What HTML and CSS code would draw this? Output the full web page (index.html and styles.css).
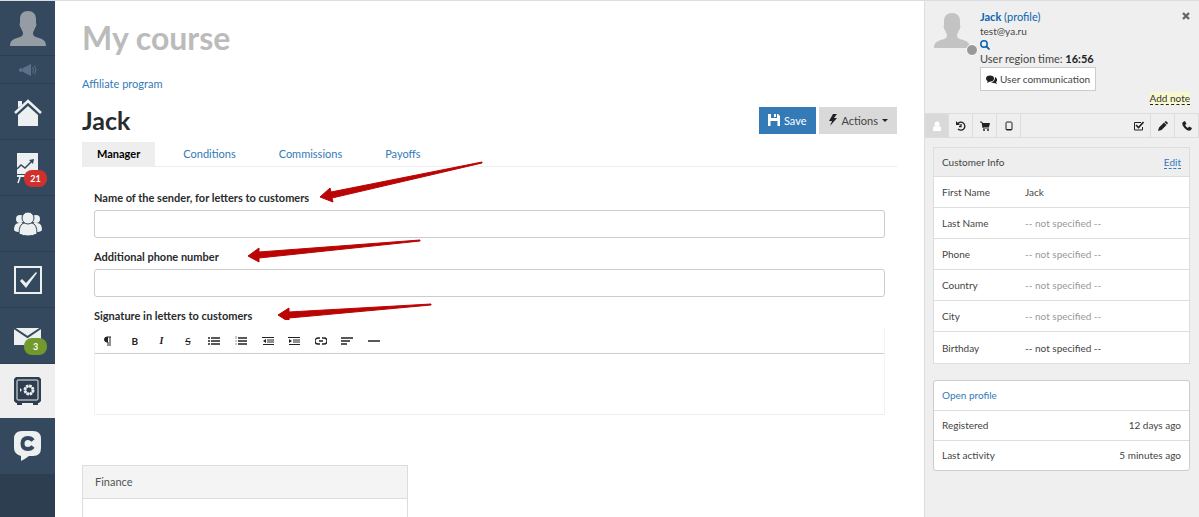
FILE: index.html
```html
<!DOCTYPE html>
<html lang="en">
<head>
    <meta charset="UTF-8">
    <meta name="viewport" content="width=device-width, initial-scale=1.0">
    <title>My course - Jack</title>
    <link rel="stylesheet" href="styles.css">
</head>
<body>
    <nav class="sidebar">
        <a href="#" class="item avatar" aria-label="Profile">
            <svg width="36" height="36" viewBox="0 0 36 36"><path fill="#959ca3" d="M18 1c5 0 8 3 8 8 0 2 0 3 0 4 1 1 0 4-1 5-1 3-2 4-2 5 0 3 2 4 6 5 4 1 7 3 7 8H0c0-5 3-7 7-8 4-1 6-2 6-5 0-1-1-2-2-5-1-1-2-4-1-5 0-1 0-2 0-4 0-5 3-8 8-8z"/></svg>
        </a>
        <a href="#" class="item news" aria-label="News">
            <svg width="18" height="14" viewBox="0 0 18 14" fill="#5b7189"><circle cx="2" cy="7" r="2"/><path d="M4 5l8-4v12L4 9z"/><path d="M13.500 4q2 3 0 6M15.500 2.500q3 4.500 0 9" fill="none" stroke="#5b7189"/></svg>
        </a>
        <a href="#" class="item" aria-label="Home">
            <svg width="28" height="28" viewBox="0 0 28 28" fill="#ecf0f1"><path d="M4 10V3h4v4z"/><path d="M1 15L14 3l13 12" fill="none" stroke="#ecf0f1" stroke-width="2.500"/><path d="M4 17L14 8l10 9v11H4z"/></svg>
        </a>
        <a href="#" class="item" aria-label="Statistics">
            <svg width="28" height="32" viewBox="0 0 28 32"><path fill="#ecf0f1" d="M3 1h21v21H3zM3 23h21v2H3z"/><path d="M3 17l4-4 4 3 7-7" fill="none" stroke="#34495e" stroke-width="1.500"/><path d="M15 8l5-1-1 5z" fill="#34495e"/><path d="M6 25l-2 6M13 25v5" stroke="#ecf0f1" stroke-width="1.500"/></svg>
            <span class="badge red">21</span>
        </a>
        <a href="#" class="item" aria-label="Users">
            <svg width="28" height="26" viewBox="0 0 28 26" fill="#ecf0f1"><circle cx="6" cy="8" r="4"/><circle cx="22" cy="8" r="4"/><path d="M0 19q0-7 5-7h4l-3 9q-5 0-6-2zM28 19q0-7-5-7h-4l3 9q5 0 6-2z"/><g stroke="#34495e"><path d="M5 23q0-10 5-11h8q5 1 5 11-9 4-18 0z"/><circle cx="14" cy="7" r="6"/></g></svg>
        </a>
        <a href="#" class="item" aria-label="Tasks">
            <svg width="28" height="28" viewBox="0 0 28 28"><rect x="1" y="1" width="26" height="26" fill="none" stroke="#ecf0f1" stroke-width="2"/><path d="M6 15l2-2 4 4L22 6l1 1-11 15z" fill="#ecf0f1"/></svg>
        </a>
        <a href="#" class="item" aria-label="Messages">
            <svg width="28" height="20" viewBox="0 0 28 20"><path fill="#ecf0f1" d="M0 2h27v17H0z"/><path d="M0 2l13.500 9L27 2" fill="none" stroke="#34495e" stroke-width="2"/></svg>
            <span class="badge green">3</span>
        </a>
        <a href="#" class="item active" aria-label="Affiliate program">
            <svg width="28" height="28" viewBox="0 0 28 28"><path fill="#2c3e50" d="M2 0h23l2 2v22l-2 2h-1v2h-5v-2H8v2H3v-2H2l-2-2V2z"/><rect x="3" y="3" width="21" height="20" rx="1" fill="none" stroke="#efefef"/><circle cx="15" cy="13" r="4" fill="none" stroke="#efefef" stroke-width="3" stroke-dasharray="2.200 .9"/><circle cx="15" cy="13" r="4" fill="none" stroke="#efefef"/><path d="M6 11v4l2-2z" fill="#efefef"/></svg>
        </a>
        <a href="#" class="item chat" aria-label="Chatium">
            <svg width="28" height="32" viewBox="0 0 28 32"><path fill="#ecf0f1" d="M8 1h11q8 0 8 8v9q0 8-8 8h-4q-4 3-8 5v-5q-7-2-7-8V9q0-8 8-8z"/><path d="M19 10.500q-2-2.500-5-2.500-5.500 0-5.500 5.500T14 19q3 0 5-2.500" fill="none" stroke="#34495e" stroke-width="4"/></svg>
        </a>
    </nav>

    <main class="main">
        <h1>My course</h1>
        <a href="#" class="crumb">Affiliate program</a>

        <div class="title-row">
            <h2>Jack</h2>
            <div class="buttons">
                <button type="button" class="btn save"><svg width="12" height="12" viewBox="0 0 12 12"><path fill="#fff" d="M0 0h3v4h6V0h1l2 2v10H9.500V7h-7v5H0zM6 0h2v3H6z"/></svg>Save</button>
                <button type="button" class="btn actions"><svg width="10" height="12" viewBox="0 0 10 12"><path fill="#222" d="M5 0h4L6 4h3L2 12l2-5H1z"/></svg>Actions<span class="caret"></span></button>
            </div>
        </div>

        <div class="tabs">
            <a href="#" class="tab current">Manager</a>
            <a href="#" class="tab">Conditions</a>
            <a href="#" class="tab">Commissions</a>
            <a href="#" class="tab">Payoffs</a>
        </div>

        <form class="form">
            <label for="senderName">Name of the sender, for letters to customers</label>
            <input type="text" id="senderName">
            <label for="phone">Additional phone number</label>
            <input type="text" id="phone">
            <label for="signature">Signature in letters to customers</label>
            <div class="editor">
                <div class="toolbar">
                    <button type="button" aria-label="Format"><svg viewBox="0 0 12 12"><path d="M9 2H5a2 2 0 0 0 0 5h1v4M8 2v9" fill="none" stroke="#222"/><path d="M6 2H5a2 2 0 0 0 0 5h1z" fill="#222"/></svg></button>
                    <button type="button" class="bold">B</button>
                    <button type="button" class="italic">I</button>
                    <button type="button" class="strike">S</button>
                    <button type="button" aria-label="Bulleted list"><svg viewBox="0 0 12 12"><path d="M0 3h2M0 6h2M0 9h2M3 3h9M3 6h9M3 9h9" stroke="#222" stroke-width="1.500"/></svg></button>
                    <button type="button" aria-label="Numbered list"><svg viewBox="0 0 12 12"><path d="M3 3h9M3 6h9M3 9h9" stroke="#222" stroke-width="1.500"/><path d="M1 1v3M0 6h2M0 9h2" stroke="#999"/></svg></button>
                    <button type="button" aria-label="Outdent"><svg viewBox="0 0 12 12"><path d="M0 2.500h12M5 5h7M5 7h7M1 9.500h11" stroke="#222" stroke-width="1.200"/><path d="M4 4v4L1 6z" fill="#222"/></svg></button>
                    <button type="button" aria-label="Indent"><svg viewBox="0 0 12 12"><path d="M0 2.500h12M5 5h7M5 7h7M1 9.500h11" stroke="#222" stroke-width="1.200"/><path d="M1 4v4l3-2z" fill="#222"/></svg></button>
                    <button type="button" aria-label="Link"><svg viewBox="0 0 12 12"><path d="M5 3H3a3 3 0 0 0 0 6h2M7 3h2a3 3 0 0 1 0 6H7M4 6h4" fill="none" stroke="#222" stroke-width="1.300"/></svg></button>
                    <button type="button" aria-label="Align"><svg viewBox="0 0 12 12"><path d="M0 3h12M0 6h9M0 9h6" stroke="#222" stroke-width="1.500"/></svg></button>
                    <button type="button" aria-label="Line"><svg viewBox="0 0 12 12"><path d="M0 6h12" stroke="#222" stroke-width="1.500"/></svg></button>
                </div>
                <textarea id="signature"></textarea>
            </div>
            <!-- hint arrows over the field labels -->
            <svg class="arrows" width="400" height="160" viewBox="94 160 400 160" fill="#b90504" stroke="#b90504" stroke-linejoin="round">
                <path d="M320 197l10-9 1 4L482 162v1L332 198l1 4z"/>
                <path d="M248 256l11-8v4l161-12v1L259 258v4z"/>
                <path d="M278 315l11-7v4l142-8v1L289 318v4z"/>
            </svg>
        </form>

        <section class="finance">
            <h3>Finance</h3>
        </section>
    </main>

    <aside class="panel">
        <div class="user">
            <div class="photo">
                <svg width="36" height="36" viewBox="0 0 36 36"><path fill="#c3c3c3" d="M18 1c5 0 8 3 8 8 0 2 0 3 0 4 1 1 0 4-1 5-1 3-2 4-2 5 0 3 2 4 6 5 4 1 7 3 7 8H0c0-5 3-7 7-8 4-1 6-2 6-5 0-1-1-2-2-5-1-1-2-4-1-5 0-1 0-2 0-4 0-5 3-8 8-8z"/></svg>
                <span class="status"></span>
            </div>
            <div class="info">
                <div class="name"><a href="#"><b>Jack</b> (profile)</a></div>
                <div class="email">test@ya.ru</div>
                <a href="#" class="search" aria-label="Search"><svg width="10" height="10" viewBox="0 0 10 10"><circle cx="4" cy="4" r="3.200" fill="none" stroke="#0b64af" stroke-width="1.500"/><path d="M6.500 6.500L9.500 9.500" stroke="#0b64af" stroke-width="1.800"/></svg></a>
                <div class="time">User region time: <b>16:56</b></div>
                <button type="button" class="talk"><svg width="11" height="9" viewBox="0 0 11 9"><ellipse cx="4" cy="3.500" rx="4" ry="3" fill="#222"/><path d="M2 5L1 8l4-2zM9 2q4 3 1 5l1 2-3-1q-2 0-3-1 4 0 4-5z" fill="#222"/></svg>User communication</button>
            </div>
            <button type="button" class="close" aria-label="Close"><svg width="8" height="8" viewBox="0 0 8 8"><path d="M1 1l6 6M7 1L1 7" stroke="#666" stroke-width="2.400"/></svg></button>
        </div>
        <div class="note"><a href="#">Add note</a></div>

        <div class="tools">
            <button type="button" class="on" aria-label="User"><svg viewBox="0 0 10 10" fill="#fff"><circle cx="5" cy="3" r="2.500"/><path d="M1 10V8q0-3 2-3 2 1 4 0 2 0 2 3v2z"/></svg></button>
            <button type="button" aria-label="History"><svg viewBox="0 0 10 10"><path d="M1.500 3A4 4 0 1 1 2 8M5 3v2.500H3" fill="none" stroke="#222" stroke-width="1.300"/><path d="M0 0v4h4z" fill="#222"/></svg></button>
            <button type="button" aria-label="Orders"><svg viewBox="0 0 10 10" fill="#222"><path d="M0 1h2l1 6h6" fill="none" stroke="#222"/><path d="M2 2h8L9 6H3z"/><circle cx="4" cy="9" r="1"/><circle cx="8" cy="9" r="1"/></svg></button>
            <button type="button" aria-label="Device"><svg viewBox="0 0 10 10"><rect x="2" y="1" width="6" height="8" rx="1" fill="none" stroke="#222"/><path d="M2 8.500h6" stroke="#222"/></svg></button>
            <button type="button" class="push" aria-label="Task"><svg viewBox="0 0 10 10"><path d="M8.500 6v3h-8V1.500H7" fill="none" stroke="#222"/><path d="M2 4l2.500 2.500L9.500 1" fill="none" stroke="#222" stroke-width="1.600"/></svg></button>
            <button type="button" aria-label="Edit"><svg viewBox="0 0 10 10" fill="#222"><path d="M0 10l1-3.500L6 1.500 8.500 4l-5 5zM6.500 1L8 0l2 2-1 1.500z"/></svg></button>
            <button type="button" aria-label="Call"><svg viewBox="0 0 10 10"><path fill="#222" d="M1 1l2-1 1.500 3L3 4q1 2 3 3l1-1.500 3 1.500-1 2q-3 2-6.500-2T1 1z"/></svg></button>
        </div>

        <table class="card customer">
            <thead>
                <tr><th>Customer Info</th><td><a href="#">Edit</a></td></tr>
            </thead>
            <tbody>
                <tr><th>First Name</th><td class="filled">Jack</td></tr>
                <tr><th>Last Name</th><td>-- not specified --</td></tr>
                <tr><th>Phone</th><td>-- not specified --</td></tr>
                <tr><th>Country</th><td>-- not specified --</td></tr>
                <tr><th>City</th><td>-- not specified --</td></tr>
                <tr><th>Birthday</th><td class="filled">-- not specified --</td></tr>
            </tbody>
        </table>

        <div class="card stats">
            <div class="row"><a href="#">Open profile</a></div>
            <div class="row"><span>Registered</span><span>12 days ago</span></div>
            <div class="row"><span>Last activity</span><span>5 minutes ago</span></div>
        </div>
    </aside>
</body>
</html>
```

FILE: styles.css
```css
* {
    box-sizing: border-box;
}

body {
    margin: 0;
    display: flex;
    min-height: 100vh;
    font-family: Lato, "Liberation Sans", sans-serif;
    font-size: 11px;
    color: #444;
    background: #fff;
    border-top: 1px solid #dcdce4;
}

a {
    color: #337ab7;
    text-decoration: none;
}

button {
    font-family: inherit;
    cursor: pointer;
}

svg {
    display: block;
}

/* left menu */
.sidebar {
    width: 55px;
    flex: none;
    background: #2c3e50;
}

.item {
    position: relative;
    display: flex;
    align-items: center;
    justify-content: center;
    height: 56px;
    background: #34495e;
    border-bottom: 1px solid #2c3e50;
}

.item.avatar {
    height: 55px;
}

.item.news {
    height: 28px;
}

.item.active {
    height: 54px;
    background: #efefef;
    border-bottom: none;
}

.item.chat {
    border-bottom: none;
}

.badge {
    position: absolute;
    left: 24px;
    top: 30px;
    width: 23px;
    height: 17px;
    border-radius: 8px;
    color: #fff;
    font-size: 9px;
    font-weight: bold;
    line-height: 17px;
    text-align: center;
}

.badge.red {
    background: #d0312d;
}

.badge.green {
    background: #71992c;
}

/* content */
.main {
    display: flex;
    flex-direction: column;
    flex: 1;
    min-width: 0;
    padding: 18px 27px 0;
}

h1 {
    margin: 0 0 19px;
    font-size: 32px;
    line-height: 38px;
    color: #bbb;
}

.crumb {
    align-self: flex-start;
    line-height: 16px;
}

.title-row {
    display: flex;
    justify-content: space-between;
    align-items: center;
    margin-top: 14px;
    height: 28px;
}

h2 {
    margin: 0;
    font-size: 25px;
    line-height: 28px;
    color: #292b2c;
}

.buttons {
    display: flex;
    gap: 3px;
}

.btn {
    display: flex;
    align-items: center;
    gap: 4px;
    height: 27px;
    padding: 0 9px;
    border: none;
    font-size: 11px;
}

.save {
    background: #337ab7;
    color: #fff;
}

.actions {
    background: #d9d9d9;
    color: #444;
}

.caret {
    border: 3px solid transparent;
    border-top-color: #222;
    border-bottom: none;
}

.tabs {
    display: flex;
    gap: 13px;
    margin-top: 8px;
    border-bottom: 1px solid #eee;
}

.tab {
    padding: 0 15px;
    line-height: 24px;
}

.tab.current {
    background: #eee;
    color: #000;
    font-weight: bold;
}

.form {
    position: relative;
    padding: 22px 12px 0;
}

.form label {
    display: block;
    line-height: 17px;
    margin-bottom: 4px;
    font-weight: bold;
    color: #292b2c;
}

.form input {
    display: block;
    width: 100%;
    height: 28px;
    margin-bottom: 10px;
    border: 1px solid #ccc;
    border-radius: 3px;
}

.toolbar {
    display: grid;
    grid-template-columns: repeat(11, 1fr);
    width: 292px;
    height: 25px;
    align-items: center;
}

.toolbar button {
    display: flex;
    justify-content: center;
    padding: 0;
    border: none;
    background: none;
    font-size: 10px;
    line-height: 12px;
    color: #222;
}

.toolbar svg {
    width: 12px;
    height: 12px;
}

.toolbar .bold {
    font-weight: bold;
}

.toolbar .italic {
    font-family: "Liberation Serif", serif;
    font-style: italic;
    font-weight: bold;
}

.toolbar .strike {
    text-decoration: line-through;
}

.editor {
    border-left: 1px solid #f2f2f2;
    border-right: 1px solid #f2f2f2;
}

.editor textarea {
    display: block;
    width: 100%;
    height: 62px;
    border: none;
    border-top: 1px solid #ccc;
    border-bottom: 1px solid #eee;
    resize: none;
}

.arrows {
    position: absolute;
    left: 12px;
    top: -7px;
    pointer-events: none;
}

.finance {
    flex: 1;
    width: 40%;
    margin-top: 50px;
    border: 1px solid #ddd;
    border-bottom: none;
}

.finance h3 {
    margin: 0;
    padding: 0 12px;
    font-size: 11px;
    font-weight: normal;
    line-height: 32px;
    color: #555;
    background: #f4f4f4;
    border-bottom: 1px solid #ddd;
}

/* user panel */
.panel {
    width: 275px;
    flex: none;
    background: #efefef;
    border-left: 1px solid #ddd;
    font-size: 10px;
}

.user {
    display: flex;
    gap: 10px;
    padding: 9px 8px 0 9px;
}

.photo {
    position: relative;
    padding-top: 2px;
}

.status {
    position: absolute;
    left: 32px;
    top: 34px;
    width: 12px;
    height: 12px;
    border: 1px solid #fff;
    border-radius: 50%;
    background: #999;
}

.info {
    flex: 1;
    line-height: 14px;
}

.name,
.time {
    font-size: 11px;
}

.name a {
    color: #0b64af;
}

.time b {
    color: #222;
}

.search {
    display: flex;
    align-items: center;
    width: 10px;
    height: 14px;
}

.talk {
    display: flex;
    align-items: center;
    gap: 3px;
    height: 24px;
    margin-top: 1px;
    padding: 0 5px;
    border: 1px solid #ccc;
    background: #fff;
    color: #444;
    font-size: 10px;
}

.close {
    align-self: flex-start;
    padding: 2px 0;
    margin-right: 1px;
    border: none;
    background: none;
}

.note {
    padding: 1px 9px 0 0;
    text-align: right;
    line-height: 12px;
}

.note a {
    display: inline-block;
    background: #f8f8cf;
    color: #333;
    border-bottom: 1px dashed #222;
}

.tools {
    display: flex;
    margin-top: 8px;
    border-top: 1px solid #ddd;
    border-bottom: 1px solid #ddd;
}

.tools button {
    display: flex;
    align-items: center;
    justify-content: center;
    width: 24px;
    height: 23px;
    padding: 0;
    border: none;
    border-right: 1px solid #ddd;
    background: none;
}

.tools .on {
    background: #d9d9d9;
}

.tools .push {
    margin-left: auto;
}

.tools svg {
    width: 10px;
    height: 10px;
}

.card {
    margin: 9px 9px 0 8px;
    background: #fff;
    border: 1px solid #ddd;
}

.customer {
    width: calc(100% - 17px);
    border-spacing: 0;
}

.customer th,
.customer td {
    height: 31px;
    padding: 0 8px;
    border-bottom: 1px solid #ddd;
    text-align: left;
    font-weight: normal;
}

.customer th {
    width: 83px;
    white-space: nowrap;
}

.customer td {
    color: #999;
}

.customer .filled {
    color: #444;
}

.customer thead th,
.customer thead td {
    height: 29px;
    background: #eee;
}

.customer thead td {
    text-align: right;
}

.customer thead a {
    border-bottom: 1px dashed #337ab7;
}

.customer tbody tr:last-child th,
.customer tbody tr:last-child td {
    border-bottom: none;
}

.stats {
    margin-top: 16px;
    border-color: #ccc;
    border-radius: 3px;
}

.row {
    display: flex;
    justify-content: space-between;
    padding: 0 8px;
    line-height: 29px;
    border-bottom: 1px solid #ddd;
}

.row:last-child {
    border-bottom: none;
}
```
